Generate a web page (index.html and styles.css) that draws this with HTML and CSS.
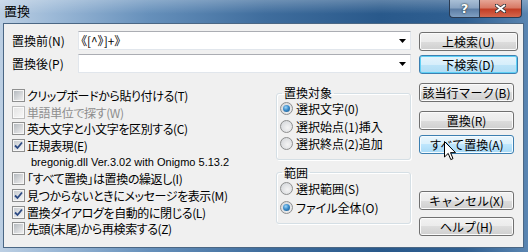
FILE: index.html
```html
<!DOCTYPE html>
<html lang="ja">
<head>
<meta charset="UTF-8">
<title>置換</title>
<link rel="stylesheet" href="styles.css">
</head>
<body>
<div class="window">
  <div class="titlebar">
    <span class="title">置換</span>
    <div class="caption-btns">
      <span class="cap help">?</span>
      <span class="cap close">
        <svg width="11" height="9" viewBox="0 0 11 9"><path d="M1 1 L10 8 M10 1 L1 8" stroke="#33363a" stroke-width="3.4" stroke-linecap="square"/><path d="M1 1 L10 8 M10 1 L1 8" stroke="#fff" stroke-width="2"/></svg>
      </span>
    </div>
  </div>

  <div class="client">
    <div class="main">
      <div class="field">
        <span class="label">置換前(N)</span>
        <div class="combo"><span class="value">《[^》]+》</span><svg class="arrow" width="7" height="4" viewBox="0 0 7 4"><path d="M0 0 H7 L3.5 4 Z" fill="#000"/></svg></div>
      </div>
      <div class="field">
        <span class="label">置換後(P)</span>
        <div class="combo"><span class="value"></span><svg class="arrow" width="7" height="4" viewBox="0 0 7 4"><path d="M0 0 H7 L3.5 4 Z" fill="#000"/></svg></div>
      </div>

      <div class="options">
        <ul class="checks">
          <li><span class="cb"></span>クリップボードから貼り付ける(T)</li>
          <li class="disabled"><span class="cb"></span>単語単位で探す(W)</li>
          <li><span class="cb"></span>英大文字と小文字を区別する(C)</li>
          <li><span class="cb checked"><svg width="9" height="9" viewBox="0 0 9 9"><path d="M1 4.5 L3.5 7 L8 1.5" fill="none" stroke="#2c4a84" stroke-width="1.8"/></svg></span>正規表現(E)</li>
          <li class="note">bregonig.dll Ver.3.02 with Onigmo 5.13.2</li>
          <li><span class="cb"></span>「すべて置換」は置換の繰返し(I)</li>
          <li><span class="cb checked"><svg width="9" height="9" viewBox="0 0 9 9"><path d="M1 4.5 L3.5 7 L8 1.5" fill="none" stroke="#2c4a84" stroke-width="1.8"/></svg></span>見つからないときにメッセージを表示(M)</li>
          <li><span class="cb checked"><svg width="9" height="9" viewBox="0 0 9 9"><path d="M1 4.5 L3.5 7 L8 1.5" fill="none" stroke="#2c4a84" stroke-width="1.8"/></svg></span>置換ダイアログを自動的に閉じる(L)</li>
          <li><span class="cb"></span>先頭(末尾)から再検索する(Z)</li>
        </ul>

        <div class="groups">
          <fieldset class="group target">
            <legend>置換対象</legend>
            <div class="radio"><span class="rb on"></span>選択文字(0)</div>
            <div class="radio"><span class="rb"></span>選択始点(1)挿入</div>
            <div class="radio"><span class="rb"></span>選択終点(2)追加</div>
          </fieldset>
          <fieldset class="group range">
            <legend>範囲</legend>
            <div class="radio"><span class="rb"></span>選択範囲(S)</div>
            <div class="radio"><span class="rb on"></span>ファイル全体(O)</div>
          </fieldset>
        </div>
      </div>
    </div>

    <div class="buttons">
      <button class="btn btn-up">上検索(U)</button>
      <button class="btn btn-down default">下検索(D)</button>
      <button class="btn btn-mark narrow">該当行マーク(B)</button>
      <button class="btn btn-replace narrow">置換(R)</button>
      <button class="btn btn-all narrow hover">すべて置換(A)</button>
      <button class="btn btn-cancel narrow">キャンセル(X)</button>
      <button class="btn btn-help narrow">ヘルプ(H)</button>
    </div>
  </div>

  <svg class="cursor" width="13" height="20" viewBox="0 0 13 20"><path d="M0.5 0.5 V16 L4.2 12.4 L6.8 18.6 L9 17.6 L6.5 11.6 H11.5 Z" fill="#fff" stroke="#000" stroke-width="1"/></svg>
</div>
</body>
</html>
```

FILE: styles.css
```css
body {
  margin: 0;
  font-family: "Noto Sans CJK JP", sans-serif;
  font-size: 12px;
  font-feature-settings: "palt";
  color: #000;
}
.window {
  position: relative;
  width: 528px;
  height: 252px;
  box-sizing: border-box;
  padding: 0 4px 4px 3px;
  display: flex;
  flex-direction: column;
  background: linear-gradient(to right, #bccfe3 0%, #9cb9d7 10%, #6690bb 28%, #3f6d9d 50%, #29598b 72%, #2f5f91 88%, #5a85b1 100%);
}
.titlebar {
  height: 23px;
  display: flex;
  justify-content: space-between;
  align-items: flex-start;
  background: linear-gradient(rgba(255,255,255,0.25), rgba(255,255,255,0) 60%);
  margin: 0 -4px 0 -3px;
  padding: 0 6px 0 4px;
}
.title {
  font-size: 13px;
  line-height: 22px;
  color: #000;
}
.caption-btns {
  display: flex;
}
.cap {
  height: 18px;
  box-sizing: border-box;
  border: 1px solid #2a3b52;
  border-top: none;
  display: flex;
  align-items: center;
  justify-content: center;
}
.help {
  width: 30px;
  border-radius: 0 0 0 4px;
  border-right: none;
  background: linear-gradient(#a9bfd6 0%, #8aa5c3 45%, #5e7fa6 55%, #7f9fc2 100%);
  color: #fff;
  font-weight: bold;
  font-size: 13px;
  font-family: "DejaVu Sans", sans-serif;
  text-shadow: 0 0 2px #233, 0 0 1px #233;
}
.close {
  width: 43px;
  border-radius: 0 0 4px 0;
  background: linear-gradient(#e6a596 0%, #d87a66 45%, #c33e26 55%, #d5674d 100%);
}
.client {
  flex: 1;
  display: flex;
  gap: 8px;
  background: #f0f0f0;
  border: 1px solid #4b6784;
  padding: 7px 5px 0 8px;
}
.main {
  width: 399px;
  display: flex;
  flex-direction: column;
}
.field {
  display: flex;
  align-items: center;
  height: 19px;
  margin-bottom: 4px;
}
.label {
  width: 66px;
}
.combo {
  flex: 1;
  height: 19px;
  box-sizing: border-box;
  display: flex;
  align-items: center;
  background: #fff;
  border: 1px solid #e1e6ec;
  border-top-color: #abadb3;
}
.value {
  flex: 1;
  padding-left: 2px;
  font-size: 12px;
}
.arrow {
  margin-right: 4px;
}
.options {
  display: flex;
  justify-content: space-between;
}
.checks {
  list-style: none;
  margin: 10px 0 0;
  padding: 0;
}
.checks li {
  display: flex;
  align-items: center;
  height: 16.7px;
  gap: 2px;
  white-space: nowrap;
  letter-spacing: -0.4px;
}
.checks li.disabled {
  color: #8d8d8d;
}
.checks li.note {
  padding-left: 19px;
  font-family: "Liberation Sans", sans-serif;
  font-size: 11px;
  letter-spacing: 0;
}
.cb {
  width: 13px;
  height: 13px;
  box-sizing: border-box;
  padding: 1px;
  border: 1px solid #8e8f8f;
  background: linear-gradient(135deg, #b5babf, #eeeeef) content-box, #f6f6f6;
  display: flex;
  align-items: center;
  justify-content: center;
}
.disabled .cb {
  border-color: #bcbcbc;
  background: linear-gradient(135deg, #e4e4e4, #f7f7f7) content-box, #fafafa;
}
.cb.checked {
  background: linear-gradient(135deg, #c6cbd0, #f4f4f5) content-box, #f6f6f6;
}
.groups {
  width: 135px;
  margin-top: 9px;
  display: flex;
  flex-direction: column;
  gap: 6px;
}
.group {
  margin: 0;
  padding: 0 0 6px 3px;
  border: 1px solid #d5dfe5;
  border-radius: 3px;
  box-shadow: inset 1px 1px 0 #fff, 1px 1px 0 #fff;
}
.group legend {
  padding: 0 2px;
  margin-left: 2px;
  line-height: 14px;
}
.radio {
  display: flex;
  align-items: center;
  gap: 3px;
  height: 17.5px;
  white-space: nowrap;
}
.range .radio {
  height: 18.5px;
}
.rb {
  width: 13px;
  height: 13px;
  box-sizing: border-box;
  border-radius: 50%;
  border: 1px solid #8e8f8f;
  background: radial-gradient(circle at 60% 60%, #f4f4f4 0%, #dadcdf 70%, #c9ccd0 100%);
  display: flex;
  align-items: center;
  justify-content: center;
}
.rb.on::after {
  content: "";
  width: 7px;
  height: 7px;
  border-radius: 50%;
  background: radial-gradient(circle at 40% 35%, #9fd6f7 0%, #3b8ccb 45%, #16507f 100%);
}
.buttons {
  width: 99px;
  display: flex;
  flex-direction: column;
  align-items: flex-start;
}
.btn {
  width: 99px;
  height: 19px;
  box-sizing: border-box;
  padding: 0;
  border: 1px solid #707070;
  border-radius: 3px;
  background: linear-gradient(#f2f2f2 0%, #ebebeb 50%, #dddddd 50%, #cfcfcf 100%);
  box-shadow: inset 0 0 0 1px #fbfbfb;
  font-family: inherit;
  font-size: 12px;
  line-height: 16px;
  color: #000;
}
.btn.narrow {
  width: 95px;
}
.btn.default {
  border-color: #3c7fb1;
  background: linear-gradient(#e5f4fc 0%, #d6eefb 50%, #bde4f8 50%, #b0dcf4 100%);
  box-shadow: inset 0 0 0 1px #5fd0f5;
}
.btn.hover {
  border-color: #3c7fb1;
  background: linear-gradient(#eaf6fd 0%, #d9f0fc 50%, #bee6fd 50%, #a7d9f5 100%);
  box-shadow: inset 0 0 0 1px #f5fbfe;
}
.btn-up { margin-top: 1px; }
.btn-down { margin-top: 4px; }
.btn-mark { margin-top: 9px; }
.btn-replace { margin-top: 9px; }
.btn-all { margin-top: 5px; }
.btn-cancel { margin-top: 37px; }
.btn-help { margin-top: 7px; }
.cursor {
  position: absolute;
  left: 444px;
  top: 141px;
}
```
